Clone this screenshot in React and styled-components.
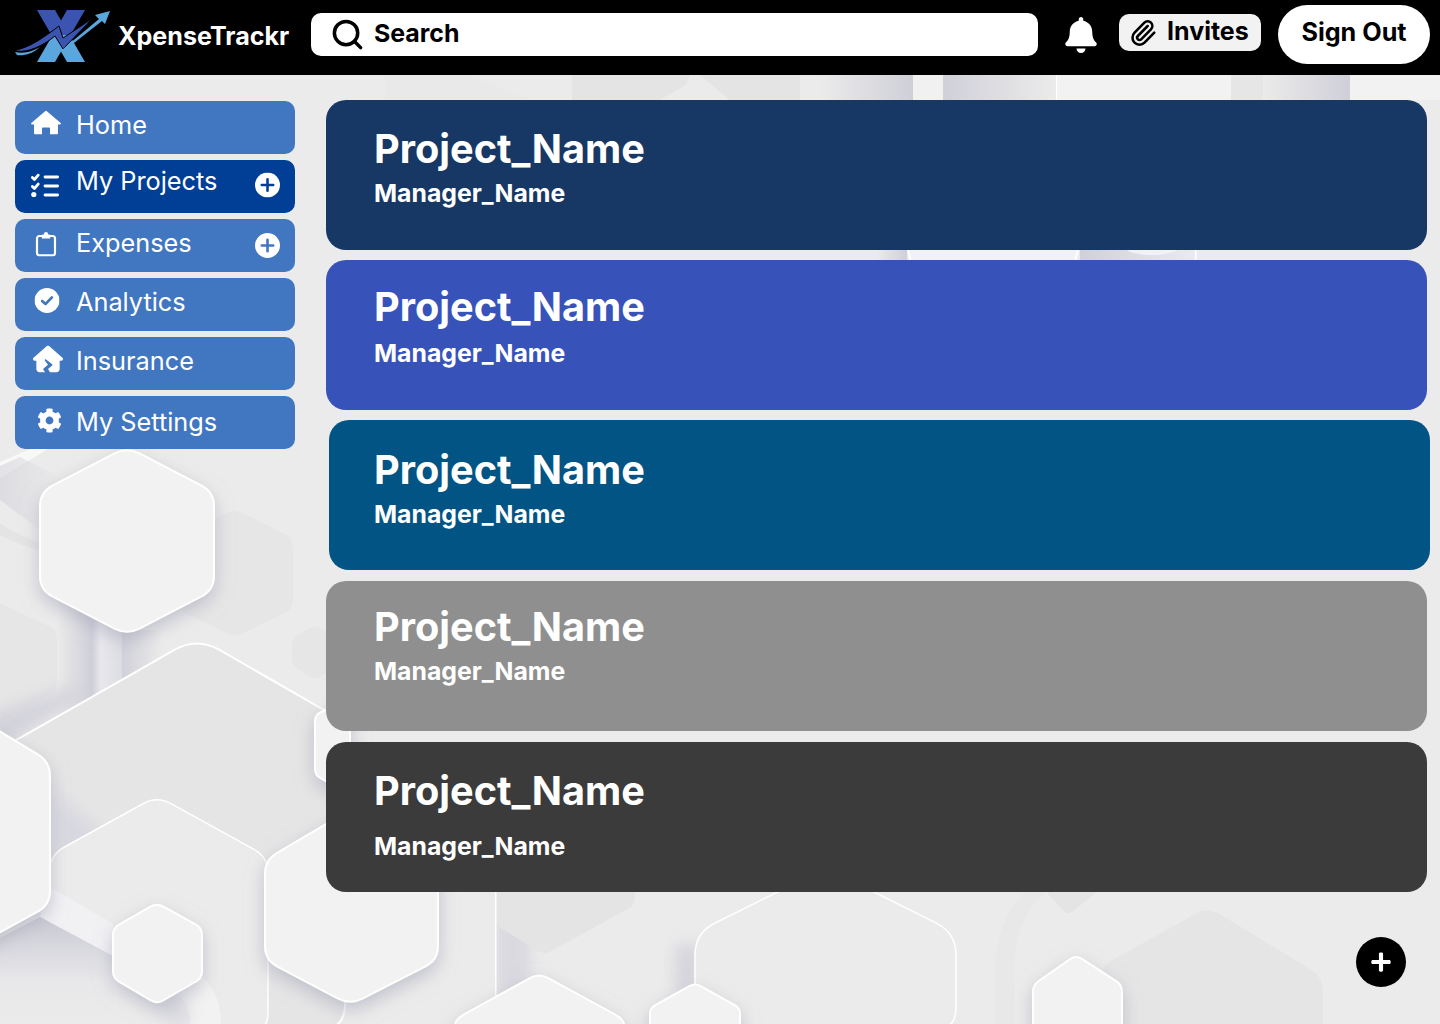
import React from 'react'
import styled, { createGlobalStyle } from 'styled-components'
import { FaBell, FaCog, FaPlus } from 'react-icons/fa'
import { FaHouseCrack } from 'react-icons/fa6'
import { Paperclip, Search as SearchIcon } from 'lucide-react'

const GlobalStyle = createGlobalStyle`
html, body { margin: 0; padding: 0; }
body { font-family: Inter, "Liberation Sans", sans-serif; background: #ebebeb; }
* { box-sizing: border-box; }
`

// polygon with soft corners, for the hexes of the backdrop
const soft = (pts, r = 10) => {
    const n = pts.length
    let d = ''
    pts.forEach((p, i) => {
        const a = pts[(i + n - 1) % n]
        const b = pts[(i + 1) % n]
        const la = Math.hypot(a[0] - p[0], a[1] - p[1])
        const lb = Math.hypot(b[0] - p[0], b[1] - p[1])
        const ra = Math.min(r, la / 2)
        const rb = Math.min(r, lb / 2)
        const s = [p[0] + ((a[0] - p[0]) * ra) / la, p[1] + ((a[1] - p[1]) * ra) / la]
        const e = [p[0] + ((b[0] - p[0]) * rb) / lb, p[1] + ((b[1] - p[1]) * rb) / lb]
        d += `${i === 0 ? 'M' : 'L'}${s[0]} ${s[1]} Q${p[0]} ${p[1]} ${e[0]} ${e[1]} `
    })
    return d + 'Z'
}

function Backdrop() {
    return (
        <BackdropSvg viewBox="0 0 1440 1024" aria-hidden="true">
            <defs>
                <filter id="raise" x="-30%" y="-30%" width="160%" height="160%">
                    <feDropShadow dx="0" dy="7" stdDeviation="9" floodColor="#a6a6ba" floodOpacity="0.6" />
                </filter>
                <filter id="blur" x="-60%" y="-60%" width="220%" height="220%"><feGaussianBlur stdDeviation="8" /></filter>
                <linearGradient id="band" x1="0" x2="1" y1="0" y2="0">
                    <stop offset="0" stopColor="#cfcfd9" />
                    <stop offset="0.3" stopColor="#e8e8ec" />
                    <stop offset="1" stopColor="#dcdce3" />
                </linearGradient>
                <linearGradient id="toDark" x1="0" x2="1" y1="0" y2="0">
                    <stop offset="0" stopColor="#ebebeb" />
                    <stop offset="1" stopColor="#cfcfd8" />
                </linearGradient>
                <linearGradient id="fromDark" x1="0" x2="1" y1="0" y2="0">
                    <stop offset="0" stopColor="#d0d0d9" />
                    <stop offset="1" stopColor="#ebebeb" />
                </linearGradient>
                <linearGradient id="down" x1="0" x2="0" y1="0" y2="1">
                    <stop offset="0" stopColor="#c9c9d4" />
                    <stop offset="0.6" stopColor="#e8e8ea" />
                    <stop offset="1" stopColor="#ebebeb" />
                </linearGradient>
            </defs>
            <rect width="1440" height="1024" fill="#ebebeb" />

            {/* top strip under the header */}
            <polygon points="385,75 466,75 532,100 385,100" fill="#e9e9e9" />
            <polygon points="572,75 690,75 686,85 660,100 572,100" fill="#e4e4e4" />
            <polygon points="700,75 800,75 800,100 730,100" fill="#e4e4e4" />
            <rect x="820" y="75" width="93" height="25" fill="url(#toDark)" />
            <rect x="913" y="75" width="30" height="25" fill="#f1f1f1" />
            <rect x="943" y="75" width="113" height="25" fill="url(#fromDark)" />
            <rect x="1056" y="75" width="1.5" height="25" fill="#fff" />
            <rect x="1057" y="75" width="174" height="25" fill="#f2f2f2" />
            <rect x="1231" y="75" width="32" height="25" fill="#e6e6e6" />
            <rect x="1263" y="75" width="87" height="25" fill="url(#toDark)" />
            <rect x="1350" y="75" width="90" height="25" fill="#f2f2f2" />

            {/* gap between the first two cards */}
            <rect x="877" y="250" width="30" height="10" fill="url(#toDark)" />
            <rect x="1080" y="250" width="115" height="10" fill="url(#fromDark)" />
            <rect x="1195" y="250" width="1.5" height="10" fill="#fff" />
            <path d={soft([[906, 240], [1080, 240], [1074, 268], [912, 268]], 4)} fill="#f2f2f2" stroke="#fff" strokeWidth="2" />
            <ellipse cx="1152" cy="248" rx="26" ry="7" fill="#f2f2f2" />

            {/* left side, under the menu */}
            <polygon points="0,462 30,449 48,449 0,478" fill="#fff" opacity="0.65" />
            <polygon points="20,457 62,478 40,530 0,500 0,466" fill="url(#fromDark)" opacity="0.55" />
            <path d="M0 524 C18 534 30 540 44 543 L44 552 C28 548 14 542 0 535 Z" fill="#e4e4e4" />
            <path d={soft([[-40, 585], [57, 630], [57, 690], [-40, 745]], 8)} fill="#e6e6e6" />
            <path d={soft([[235, 509], [293, 538], [293, 609], [235, 637], [177, 609], [177, 538]], 10)} fill="#e6e6e6" />
            <path d={soft([[315, 625], [338, 638], [338, 665], [315, 680], [292, 665], [292, 638]], 6)} fill="#e6e6e6" />
            <rect x="57" y="600" width="35" height="130" fill="url(#toDark)" />
            <rect x="92" y="600" width="30" height="130" fill="url(#band)" />
            <rect x="122" y="630" width="40" height="60" fill="url(#fromDark)" />
            <polygon points="-10,715 60,690 92,690 20,738 -10,752" fill="#cfcfd8" filter="url(#blur)" opacity="0.85" />

            {/* wide flat hexes */}
            <path d={soft([[20, 738], [197, 637], [345, 722], [345, 1030], [-20, 1030], [-20, 760]], 26)} fill="#e5e5e5" stroke="#fff" strokeWidth="2" />
            <polygon points="52,790 110,840 52,870" fill="#d8d8e0" filter="url(#blur)" />
            <path d={soft([[50, 855], [157, 796], [268, 857], [268, 1030], [50, 1030]], 16)} fill="#ebebeb" stroke="#fff" strokeWidth="1.5" />
            <polygon points="50,887 113,924 113,956 40,917" fill="#f1f1f4" />
            <polygon points="0,938 40,917 113,956 113,1024 0,1024" fill="url(#down)" />
            <path d="M200 975 C214 986 221 1004 221 1024 H190 C190 1010 186 1001 177 995 Z" fill="#f2f2f2" />
            <path d="M177 995 C186 1001 190 1010 190 1024 H165 C165 1014 160 1006 150 1003 Z" fill="#d5d5dd" filter="url(#blur)" opacity="0.8" />

            {/* bottom strip */}
            <rect x="496" y="892" width="34" height="110" fill="#d4d4dc" filter="url(#blur)" opacity="0.8" />
            <path d={soft([[496, 880], [635, 880], [635, 905], [544, 955], [496, 925]], 8)} fill="#e4e4e4" />
            <rect x="495" y="892" width="1.5" height="108" fill="#fff" />
            <rect x="478" y="892" width="17" height="110" fill="#ebebeb" />
            <rect x="676" y="945" width="24" height="50" fill="#cfcfd8" filter="url(#blur)" opacity="0.85" />
            <path d={soft([[695, 1030], [695, 933], [826, 868], [956, 933], [956, 1030]], 22)} fill="#ebebeb" stroke="#fff" strokeWidth="1.5" />
            <path d="M1046 892 C1022 912 1014 940 1014 975 V1024 H995 V975 C995 936 1006 910 1025 892 Z" fill="#e8e8e8" />
            <path d={soft([[1046, 880], [1100, 880], [1097, 892], [1068, 915], [1046, 892]], 5)} fill="#e4e4e4" />
            <path d={soft([[1208, 907], [1323, 977], [1323, 1040], [1100, 1040], [1100, 967]], 14)} fill="#e5e5e5" />

            {/* raised hexes */}
            <g fill="#f2f2f2" stroke="#fff" strokeWidth="2" filter="url(#raise)">
                <path d={soft([[127, 447], [214, 492], [214, 590], [127, 635], [40, 590], [40, 492]], 14)} />
                <path d={soft([[-60, 695], [50, 762], [50, 905], [-60, 965]], 14)} />
                <path d={soft([[157, 903], [202, 928], [202, 978], [157, 1004], [113, 978], [113, 928]], 7)} />
                <path d={soft([[350, 810], [438, 860], [438, 960], [350, 1005], [265, 960], [265, 860]], 14)} />
                <path d={soft([[315, 715], [350, 698], [350, 795], [315, 775]], 6)} />
                <path d={soft([[539, 973], [625, 1020], [625, 1060], [454, 1060], [454, 1020]], 10)} />
                <path d={soft([[695, 983], [740, 1008], [740, 1050], [650, 1050], [650, 1008]], 6)} />
                <path d={soft([[1076, 955], [1122, 985], [1122, 1050], [1033, 1050], [1033, 985]], 7)} />
            </g>
        </BackdropSvg>
    )
}

function Logo() {
    return (
        <LogoSvg viewBox="0 0 96 54" aria-hidden="true">
            <polygon points="22,0 40,0 57.3,30 39.3,30" fill="#3a54b0" />
            <polygon points="52,0 70,0 52.7,30 34.7,30" fill="#3a54b0" />
            <polygon points="36.4,25 54.4,25 70,52 52,52" fill="#5aa6dd" />
            <polygon points="37.6,25 55.6,25 40,52 22,52" fill="#5aa6dd" />
            <path d="M0 40 C14 38 28 28 44 16 L48 28 L78 8 L48 39 L40 26 C28 36 12 43 2 41 Z" fill="#3a54b0" stroke="#000" strokeWidth="1" />
            <path d="M0 42 C10 44 18 41 25 37 C18 44 8 46 2 45 Z" fill="#5aa6dd" />
            <polygon points="48,39 84,9 80,5 95,1 90,14 87,11 50,40" fill="#5aa6dd" />
        </LogoSvg>
    )
}

function HomeIcon() {
    return (
        <svg width="30" height="24" viewBox="0 0 30 24" fill="#fff">
            <path d="M15 0 L30 12.8 Q30 14 28.6 14 H27 V22.5 Q27 24 25.5 24 H19 V18 Q19 17 18 17 H12 Q11 17 11 18 V24 H4.5 Q3 24 3 22.5 V14 H1.4 Q0 14 0 12.8 Z" />
        </svg>
    )
}

function ChecklistIcon() {
    return (
        <svg width="28" height="24" viewBox="0 0 28 24" fill="none" stroke="#fff" strokeWidth="2.8" strokeLinecap="round" strokeLinejoin="round">
            <path d="M1.4 4 L3.4 6 L7.2 1.6" />
            <path d="M1.4 13 L3.4 15 L7.2 10.6" />
            <circle cx="2.8" cy="21" r="2.6" fill="#fff" stroke="none" />
            <path d="M14 3.5 H26.6 M14 12.5 H26.6 M14 21.5 H26.6" />
        </svg>
    )
}

function ClipboardIcon() {
    return (
        <svg width="22" height="25" viewBox="0 0 22 25" fill="none" stroke="#fff" strokeWidth="2.2">
            <rect x="2" y="4.5" width="18" height="19.4" rx="2.4" />
            <path d="M6.8 7 V4 Q6.8 3 8 3 H8.8 Q9 0.6 11 0.6 T13.2 3 H14 Q15.2 3 15.2 4 V7 Z" fill="#fff" stroke="none" />
        </svg>
    )
}

function CheckDot() {
    return (
        <svg width="25" height="25" viewBox="0 0 25 25">
            <circle cx="12.5" cy="12.5" r="12.5" fill="#fff" />
            <path d="M7.6 13 L11 16 L17.4 9.4" fill="none" stroke="#4176C0" strokeWidth="2.6" strokeLinecap="round" strokeLinejoin="round" />
        </svg>
    )
}

function PlusDot() {
    return (
        <svg width="25" height="25" viewBox="0 0 25 25">
            <circle cx="12.5" cy="12.5" r="12.5" fill="#fff" />
            <path d="M6.8 12.5 H18.2 M12.5 6.8 V18.2" fill="none" stroke="currentColor" strokeWidth="2.6" strokeLinecap="round" />
        </svg>
    )
}

const navItems = [
    { label: 'Home', icon: <HomeIcon />, iconY: -5.5, textY: -3 },
    { label: 'My Projects', icon: <ChecklistIcon />, iconX: -1, iconY: -1.5, textY: -6, addY: -1.5, active: true },
    { label: 'Expenses', icon: <ClipboardIcon />, iconY: -1.5, textY: -3, addY: 0 },
    { label: 'Analytics', icon: <CheckDot />, iconX: 0.5, iconY: -4, textY: -3 },
    { label: 'Insurance', icon: <FaHouseCrack size={30} />, iconX: 2, iconY: -5, textY: -3 },
    { label: 'My Settings', icon: <FaCog size={25} />, iconX: 3, iconY: -2, textY: -1 },
]

const projects = [
    { color: '#173764', top: 25, gap: 5 },
    { color: '#3753BA', top: 23, gap: 7 },
    { color: '#015484', top: 26, gap: 5, shift: 3 },
    { color: '#8F8F8F', top: 22, gap: 5, drop: 1 },
    { color: '#3B3B3B', top: 25, gap: 16, drop: 1 },
]

function App() {
    return (
        <>
            <GlobalStyle />
            <Backdrop />
            <Page>
                <Header>
                    <Brand>
                        <Logo />
                        <BrandName>XpenseTrackr</BrandName>
                    </Brand>
                    <SearchBar>
                        <SearchIcon size={35} strokeWidth={2.4} color="#000" />
                        <SearchText>Search</SearchText>
                    </SearchBar>
                    <BellSlot>
                        <FaBell size={36} />
                    </BellSlot>
                    <Invites>
                        <Paperclip size={28} strokeWidth={2.2} />
                        <InvitesText>Invites</InvitesText>
                    </Invites>
                    <SignOut>Sign Out</SignOut>
                </Header>
                <Body>
                    <Sidebar>
                        {navItems.map((item) => (
                            <NavItem key={item.label} $active={item.active}>
                                <NavIcon $x={item.iconX || 0} $y={item.iconY}>{item.icon}</NavIcon>
                                <NavLabel $y={item.textY}>{item.label}</NavLabel>
                                {item.addY !== undefined && (
                                    <AddDot $active={item.active} $y={item.addY}>
                                        <PlusDot />
                                    </AddDot>
                                )}
                            </NavItem>
                        ))}
                    </Sidebar>
                    <Projects>
                        {projects.map((p, i) => (
                            <ProjectCard key={i} $color={p.color} $shift={p.shift} $top={p.top} $drop={p.drop}>
                                <ProjectName>Project_Name</ProjectName>
                                <ManagerName $gap={p.gap}>Manager_Name</ManagerName>
                            </ProjectCard>
                        ))}
                    </Projects>
                </Body>
            </Page>
            <Fab>
                <FaPlus size={22} />
            </Fab>
        </>
    )
}

export default App

const BackdropSvg = styled.svg`
position: absolute;
top: 0;
left: 0;
width: 1440px;
height: 1024px;
z-index: 0;
`

const Page = styled.div`
position: relative;
z-index: 1;
width: 1440px;
height: 1024px;
overflow: hidden;
`

const Header = styled.header`
height: 75px;
background: #000;
display: flex;
align-items: center;
padding: 0 10px 6px 15px;
`

const Brand = styled.div`
display: flex;
align-items: center;
width: 296px;
flex-shrink: 0;
`

const LogoSvg = styled.svg`
width: 96px;
height: 54px;
flex-shrink: 0;
margin-top: 4px;
`

const BrandName = styled.span`
margin: 2px 0 0 7px;
color: #fff;
font-size: 25.1px;
font-weight: 700;
`

const SearchBar = styled.div`
width: 727px;
height: 43px;
flex-shrink: 0;
background: #fff;
border-radius: 10px;
display: flex;
align-items: center;
gap: 9px;
padding-left: 19px;
color: #000;
`

const SearchText = styled.span`
font-size: 24.9px;
font-weight: 700;
margin-bottom: 3px;
`

const BellSlot = styled.div`
width: 34px;
margin-left: 26px;
display: flex;
justify-content: center;
color: #fff;
`

const Invites = styled.div`
width: 142px;
height: 37px;
margin: 0 0 4px 21px;
background: #f2f2f2;
border-radius: 10px;
display: flex;
align-items: center;
gap: 10px;
padding-left: 10px;
color: #000;
`

const InvitesText = styled.span`
font-size: 25px;
font-weight: 700;
margin-bottom: 3px;
`

const SignOut = styled.button`
width: 152px;
height: 59px;
margin-left: 17px;
padding: 0 0 5px;
border: 0;
background: #fff;
border-radius: 30px;
font-family: inherit;
font-size: 25.2px;
font-weight: 700;
color: #000;
`

const Body = styled.main`
display: flex;
`

const Sidebar = styled.nav`
width: 326px;
flex-shrink: 0;
padding: 26px 31px 0 15px;
display: flex;
flex-direction: column;
gap: 6px;
`

const NavItem = styled.div`
height: 53px;
border-radius: 10px;
background: ${(p) => (p.$active ? '#013F96' : '#4176C0')};
color: #fff;
display: flex;
align-items: center;
padding-left: 15px;
`

const NavIcon = styled.span`
width: 32px;
height: 32px;
display: flex;
align-items: center;
justify-content: center;
transform: translate(${(p) => p.$x}px, ${(p) => p.$y}px);
`

const NavLabel = styled.span`
margin-left: 14px;
font-size: 25.3px;
font-weight: 400;
transform: translateY(${(p) => p.$y}px);
`

const AddDot = styled.span`
margin-left: auto;
margin-right: 15px;
display: flex;
color: ${(p) => (p.$active ? '#013F96' : '#4176C0')};
transform: translateY(${(p) => p.$y}px);
`

const Projects = styled.section`
flex: 1;
padding-top: 25px;
display: flex;
flex-direction: column;
gap: 10px;
`

const ProjectCard = styled.article`
width: 1101px;
height: 150px;
flex-shrink: 0;
margin-left: ${(p) => p.$shift || 0}px;
margin-top: ${(p) => p.$drop || 0}px;
padding: ${(p) => p.$top}px 0 0 ${(p) => 48 - (p.$shift || 0)}px;
border-radius: 20px;
background: ${(p) => p.$color};
color: #fff;
`

const ProjectName = styled.div`
font-size: 39.7px;
line-height: 48px;
font-weight: 700;
`

const ManagerName = styled.div`
margin-top: ${(p) => p.$gap}px;
font-size: 24.8px;
line-height: 30px;
font-weight: 700;
`

const Fab = styled.button`
position: absolute;
z-index: 2;
left: 1356px;
top: 937px;
width: 50px;
height: 50px;
padding: 0;
border: 0;
border-radius: 50%;
background: #000;
color: #fff;
display: flex;
align-items: center;
justify-content: center;
`
